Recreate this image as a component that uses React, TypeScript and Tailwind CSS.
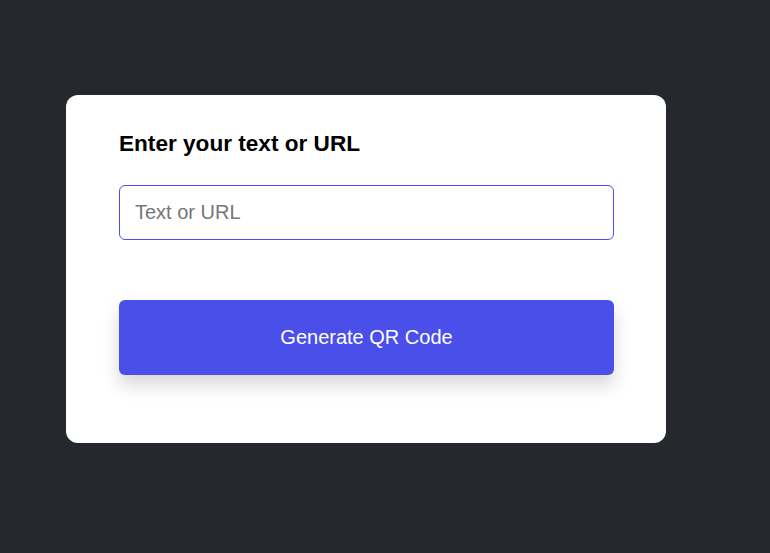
import { useState } from "react";

export default function App() {
  const [text, setText] = useState("");

  return (
    <div
      className="min-h-[553px] w-full bg-[#25282d] pl-[66px] pt-[95px]"
      style={{ fontFamily: '"Liberation Sans", Arial, sans-serif' }}
    >
      <div className="flex h-[348px] w-[600px] flex-col rounded-[12px] bg-white pl-[53px] pr-[52px] pt-[36px]">
        <h2 className="text-[22.6px] font-bold leading-[26px] text-black">Enter your text or URL</h2>
        <input
          type="text"
          value={text}
          onChange={(event) => setText(event.target.value)}
          placeholder="Text or URL"
          className="mt-[28px] h-[55px] w-full rounded-[6px] border border-[#4f4fe6] bg-white px-[15px] text-[20px] text-black placeholder:text-[#767676] focus:outline-none"
        />
        <button
          type="button"
          className="mt-[60px] h-[75px] w-full rounded-[6px] bg-[#4b4fea] pb-[2px] text-[20px] text-white shadow-[0_10px_18px_rgba(0,0,0,0.16)]"
        >
          Generate QR Code
        </button>
      </div>
    </div>
  );
}
